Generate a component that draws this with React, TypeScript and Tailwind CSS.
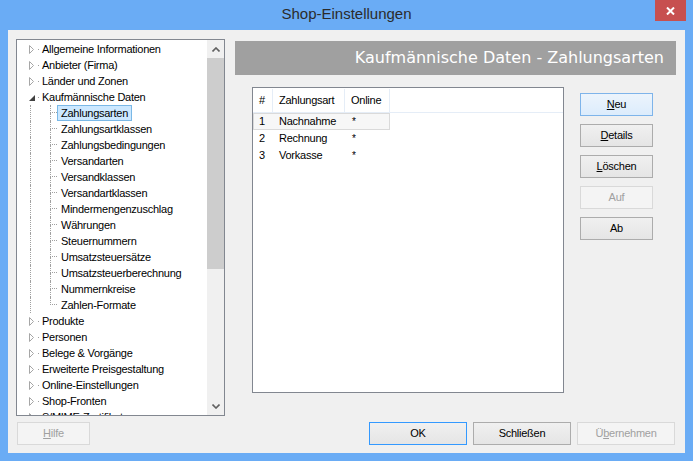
import React from 'react';

// Tree entries of the left navigation
interface TreeItem {
  label: string;
  children?: string[];
}

const treeItems: TreeItem[] = [
  { label: 'Allgemeine Informationen' },
  { label: 'Anbieter (Firma)' },
  { label: 'Länder und Zonen' },
  {
    label: 'Kaufmännische Daten',
    children: [
      'Zahlungsarten',
      'Zahlungsartklassen',
      'Zahlungsbedingungen',
      'Versandarten',
      'Versandklassen',
      'Versandartklassen',
      'Mindermengenzuschlag',
      'Währungen',
      'Steuernummern',
      'Umsatzsteuersätze',
      'Umsatzsteuerberechnung',
      'Nummernkreise',
      'Zahlen-Formate',
    ],
  },
  { label: 'Produkte' },
  { label: 'Personen' },
  { label: 'Belege & Vorgänge' },
  { label: 'Erweiterte Preisgestaltung' },
  { label: 'Online-Einstellungen' },
  { label: 'Shop-Fronten' },
  { label: 'S/MIME-Zertifikate' },
];

const rows = [
  { nr: '1', name: 'Nachnahme', online: '*' },
  { nr: '2', name: 'Rechnung', online: '*' },
  { nr: '3', name: 'Vorkasse', online: '*' },
];

const RootRow: React.FC<{ item: TreeItem }> = ({ item }) => (
  <div className="flex h-4 shrink-0 items-center whitespace-nowrap">
    <span className="w-[12px] shrink-0" />
    {item.children ? (
      <svg width="6" height="9" viewBox="0 0 6 9" className="shrink-0">
        <polygon points="6,2 6,8 0,8" fill="#404040" />
      </svg>
    ) : (
      <svg width="6" height="9" viewBox="0 0 6 9" className="shrink-0">
        <polygon points="0.5,0.5 4.5,4.5 0.5,8.5" fill="#ffffff" stroke="#a6a6a6" strokeWidth="1" />
      </svg>
    )}
    <span className="w-[3px] shrink-0" />
    <span className="h-px w-px shrink-0 bg-[#a0a0a0]" />
    <span className="w-[3px] shrink-0" />
    <span>{item.label}</span>
  </div>
);

const ChildRow: React.FC<{ label: string; last: boolean; selected: boolean }> = ({ label, last, selected }) => (
  <div className="flex h-4 shrink-0 whitespace-nowrap">
    <span className="w-[13px] shrink-0" />
    <span className="w-px shrink-0 border-l border-dotted border-[#a0a0a0]" />
    <span className="w-[19px] shrink-0" />
    <span className="flex w-[7px] shrink-0 flex-col">
      <span className="h-[8px] border-b border-l border-dotted border-[#a0a0a0]" />
      {!last && <span className="flex-1 border-l border-dotted border-[#a0a0a0]" />}
    </span>
    <span
      className={
        selected
          ? 'flex h-4 items-center border border-[#7ab8e6] bg-[#cce8ff] px-[3px]'
          : 'flex h-4 items-center border border-transparent px-[3px]'
      }
    >
      {label}
    </span>
  </div>
);

const Tree: React.FC = () => (
  <div className="ml-[8px] flex h-[377px] w-[209px] shrink-0 border border-[#828790] bg-white">
    <div className="flex flex-1 flex-col overflow-hidden pt-px">
      {treeItems.map((item) => (
        <React.Fragment key={item.label}>
          <RootRow item={item} />
          {item.children?.map((c, i) => (
            <ChildRow key={c} label={c} last={i === item.children!.length - 1} selected={i === 0} />
          ))}
        </React.Fragment>
      ))}
    </div>
    {/* scrollbar */}
    <div className="flex w-[17px] shrink-0 flex-col bg-[#f0f0f0]">
      <div className="flex h-[17px] items-center justify-center pt-[2px]">
        <svg width="8" height="5" viewBox="0 0 8 5">
          <path d="M0.5 4.5 L4 1 L7.5 4.5" fill="none" stroke="#606060" strokeWidth="1.6" />
        </svg>
      </div>
      <div className="mt-px h-[211px] bg-[#cdcdcd]" />
      <div className="flex-1" />
      <div className="flex h-[17px] items-center justify-center">
        <svg width="8" height="5" viewBox="0 0 8 5">
          <path d="M0.5 0.5 L4 4 L7.5 0.5" fill="none" stroke="#606060" strokeWidth="1.6" />
        </svg>
      </div>
    </div>
  </div>
);

type BtnKind = 'normal' | 'hot' | 'default' | 'disabled';

const Btn: React.FC<{ kind?: BtnKind; w: string; children: React.ReactNode }> = ({ kind = 'normal', w, children }) => {
  const styles: Record<BtnKind, string> = {
    normal: 'border-[#acacac] bg-gradient-to-b from-[#f0f0f0] to-[#e5e5e5] text-black',
    hot: 'border-[#7eb4ea] bg-gradient-to-b from-[#ecf4fc] to-[#dcecfc] text-black',
    default: 'border-[#3399ff] bg-gradient-to-b from-[#f0f0f0] to-[#e5e5e5] text-black',
    disabled: 'border-[#d9d9d9] bg-[#f4f4f4] text-[#a0a0a0]',
  };
  return (
    <div className={`flex h-[23px] ${w} shrink-0 items-center justify-center border ${styles[kind]}`}>
      {children}
    </div>
  );
};

export default function App() {
  return (
    <div className="flex h-[461px] w-[693px] flex-col bg-[#6aacf5] font-['Liberation_Sans',Arial,sans-serif] text-[11px] tracking-[-0.25px] text-black">
      {/* title bar */}
      <div className="relative flex h-[30px] shrink-0 items-center justify-center">
        <span className="pb-px text-[15px] tracking-normal text-[#2b2b2b]">Shop-Einstellungen</span>
        <div className="absolute right-[7px] top-0 flex h-[21px] w-[31px] items-center justify-center bg-[#c75050]">
          <svg width="9" height="8" viewBox="0 0 9 8">
            <path d="M1 0.5 L8 7.5 M8 0.5 L1 7.5" stroke="#ffffff" strokeWidth="2" />
          </svg>
        </div>
      </div>

      {/* client area */}
      <div className="mx-[8px] flex h-[423px] flex-col bg-[#f0f0f0]">
        <div className="flex pt-[9px]">
          <Tree />

          <div className="ml-[10px] flex flex-col pt-[2px]">
            <div className="flex h-[34px] w-[441px] items-center justify-end bg-[#a0a0a0] pr-[12px] font-['DejaVu_Sans',sans-serif] text-[16px] tracking-normal text-white">
              Kaufmännische Daten - Zahlungsarten
            </div>

            <div className="flex">
              {/* list */}
              <div className="ml-[17px] mt-[12px] flex h-[306px] w-[312px] flex-col border border-[#828790] bg-white">
                <div className="flex h-[25px] shrink-0 border-b border-[#e5edf7] pt-px">
                  <div className="flex w-[20px] items-center border-r border-[#e5edf7] pl-[6px]">#</div>
                  <div className="flex w-[72px] items-center border-r border-[#e5edf7] pl-[6px]">Zahlungsart</div>
                  <div className="flex w-[45px] items-center border-r border-[#e5edf7] pl-[6px]">Online</div>
                </div>
                {rows.map((r, i) => (
                  <div
                    key={r.nr}
                    className={
                      i === 0
                        ? 'flex h-[17px] w-[137px] items-center border border-[#dadada] bg-[#f7f7f7]'
                        : 'flex h-[17px] w-[137px] items-center border border-transparent'
                    }
                  >
                    <span className="w-[19px] pl-[5px]">{r.nr}</span>
                    <span className="w-[73px] pl-[6px]">{r.name}</span>
                    <span className="pl-[6px] text-[10px]">{r.online}</span>
                  </div>
                ))}
              </div>

              {/* action buttons */}
              <div className="ml-[16px] mt-[18px] flex flex-col gap-[8px]">
                <Btn kind="hot" w="w-[73px]">
                  <span><span className="underline">N</span>eu</span>
                </Btn>
                <Btn w="w-[73px]">
                  <span><span className="underline">D</span>etails</span>
                </Btn>
                <Btn w="w-[73px]">
                  <span><span className="underline">L</span>öschen</span>
                </Btn>
                <Btn kind="disabled" w="w-[73px]">Auf</Btn>
                <Btn w="w-[73px]">Ab</Btn>
              </div>
            </div>
          </div>
        </div>

        {/* bottom buttons */}
        <div className="mt-[6px] flex items-center pl-[9px] pr-[10px]">
          <Btn kind="disabled" w="w-[73px]">
            <span><span className="underline">H</span>ilfe</span>
          </Btn>
          <div className="flex-1" />
          <div className="flex gap-[6px]">
            <Btn kind="default" w="w-[98px]">OK</Btn>
            <Btn w="w-[98px]">Schließen</Btn>
            <Btn kind="disabled" w="w-[98px]">
              <span>Ü<span className="underline">b</span>ernehmen</span>
            </Btn>
          </div>
        </div>
      </div>
    </div>
  );
}
